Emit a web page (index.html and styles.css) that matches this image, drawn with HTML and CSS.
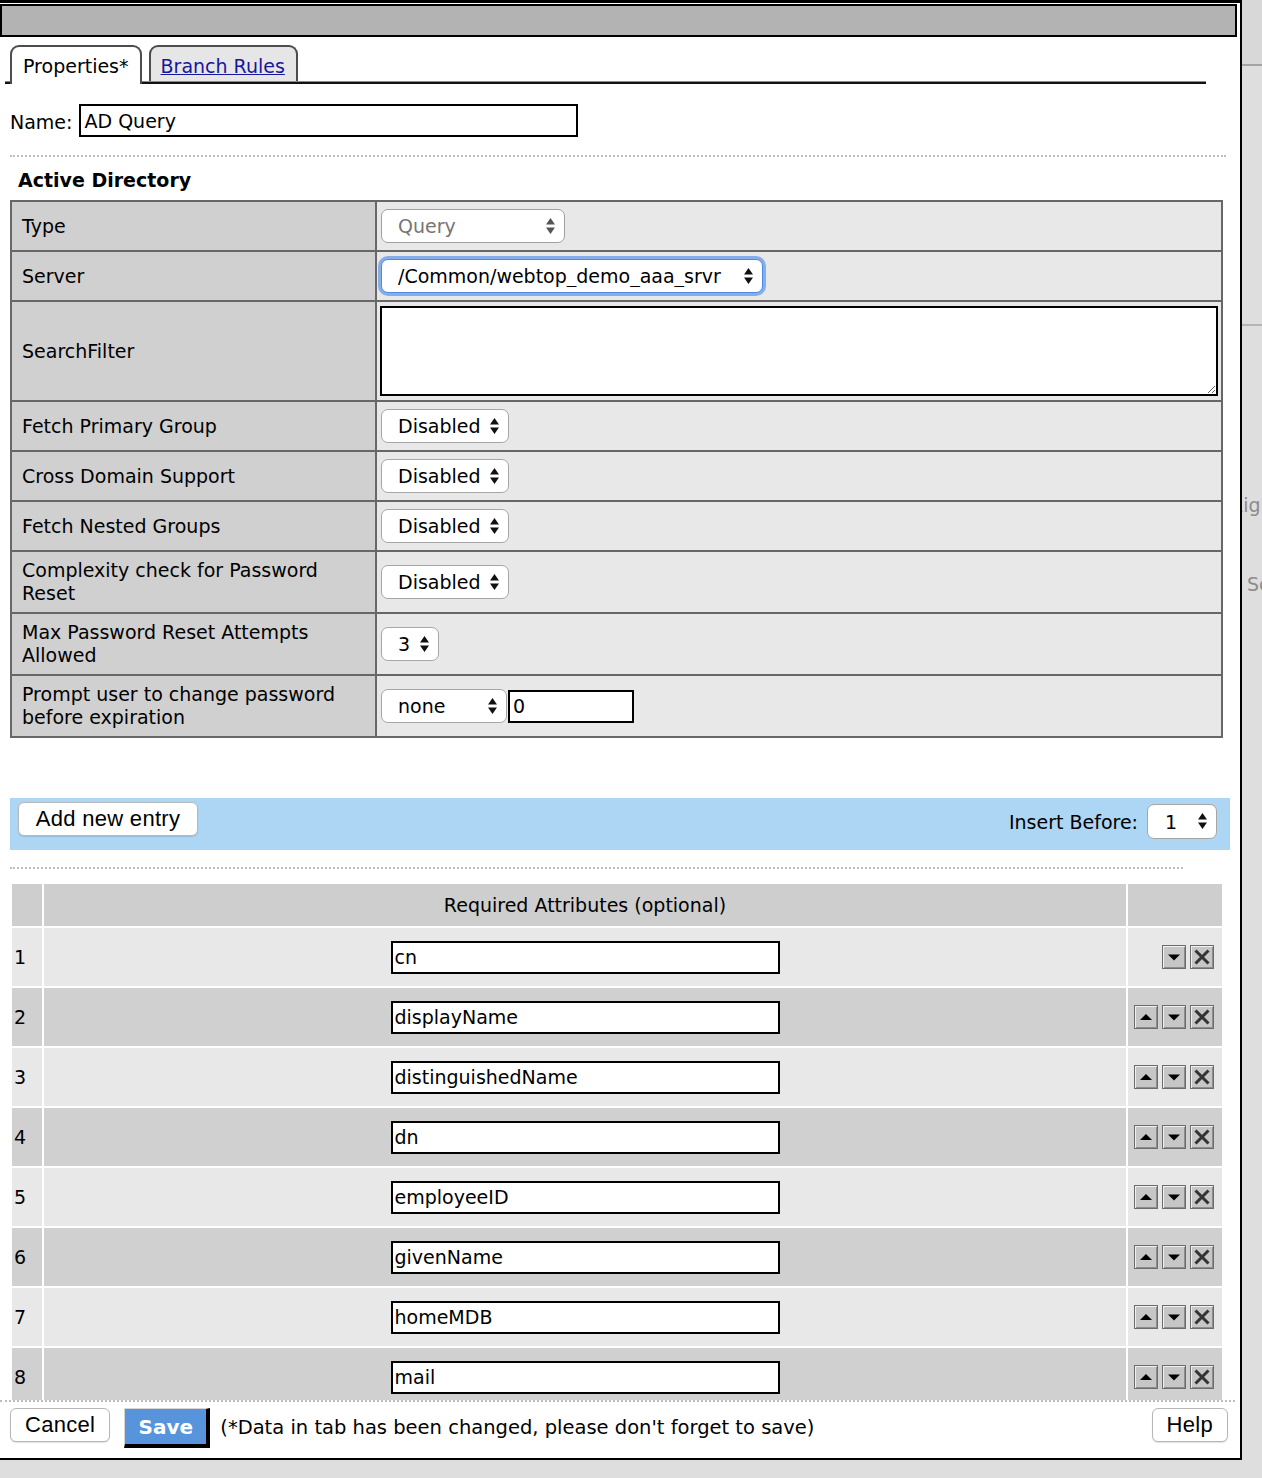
FILE: index.html
```html
<html>
<head>
<title>AD Query</title>
<link rel="stylesheet" href="styles.css">
</head>
<body>
<!-- shared glyphs for the select carets and the row buttons -->
<svg class="defs" width="0" height="0">
  <symbol id="updown" viewBox="0 0 9 16"><path d="M0 6.5 4.5 0 9 6.5Z M0 9.5 9 9.5 4.5 16Z"/></symbol>
  <symbol id="tri-up" viewBox="0 0 22 22"><path d="M5 14 11 8 17 14Z"/></symbol>
  <symbol id="tri-down" viewBox="0 0 22 22"><path d="M5 8.5 17 8.5 11 14.5Z"/></symbol>
  <symbol id="cross" viewBox="0 0 22 22"><path d="M4.5 4.5 17.5 17.5 M17.5 4.5 4.5 17.5" fill="none" stroke="#333" stroke-width="3"/></symbol>
</svg>

<div class="dialog">
  <div class="titlebar"></div>

  <div class="main">
    <div class="tabs">
      <span class="tab active">Properties*</span>
      <span class="tab"><a href="#">Branch Rules</a></span>
    </div>

    <div class="name-row">
      <label for="itemName">Name:</label>
      <input id="itemName" class="text name" type="text" value="AD Query">
    </div>

    <hr class="dots">
    <h3>Active Directory</h3>

    <table class="props">
      <colgroup><col class="c-label"><col></colgroup>
      <tr>
        <td class="lbl">Type</td>
        <td class="val"><span class="select w-query disabled"><select aria-disabled="true" tabindex="-1"><option>Query</option></select><svg class="caret"><use href="#updown"/></svg></span></td>
      </tr>
      <tr>
        <td class="lbl">Server</td>
        <td class="val"><span class="select w-server focus"><select><option>/Common/webtop_demo_aaa_srvr</option></select><svg class="caret"><use href="#updown"/></svg></span></td>
      </tr>
      <tr>
        <td class="lbl">SearchFilter</td>
        <td class="val tight"><textarea class="filter"></textarea></td>
      </tr>
      <tr>
        <td class="lbl">Fetch Primary Group</td>
        <td class="val"><span class="select w-flag"><select><option>Disabled</option><option>Enabled</option></select><svg class="caret"><use href="#updown"/></svg></span></td>
      </tr>
      <tr>
        <td class="lbl">Cross Domain Support</td>
        <td class="val"><span class="select w-flag"><select><option>Disabled</option><option>Enabled</option></select><svg class="caret"><use href="#updown"/></svg></span></td>
      </tr>
      <tr>
        <td class="lbl">Fetch Nested Groups</td>
        <td class="val"><span class="select w-flag"><select><option>Disabled</option><option>Enabled</option></select><svg class="caret"><use href="#updown"/></svg></span></td>
      </tr>
      <tr>
        <td class="lbl">Complexity check for Password Reset</td>
        <td class="val"><span class="select w-flag"><select><option>Disabled</option><option>Enabled</option></select><svg class="caret"><use href="#updown"/></svg></span></td>
      </tr>
      <tr>
        <td class="lbl">Max Password Reset Attempts Allowed</td>
        <td class="val"><span class="select w-num"><select><option>3</option></select><svg class="caret"><use href="#updown"/></svg></span></td>
      </tr>
      <tr>
        <td class="lbl">Prompt user to change password before expiration</td>
        <td class="val"><span class="select w-none"><select><option>none</option></select><svg class="caret"><use href="#updown"/></svg></span><input class="text days" type="text" value="0"></td>
      </tr>
    </table>

    <div class="entry-bar">
      <button class="btn add">Add new entry</button>
      <div class="insert">
        <label>Insert Before:</label>
        <span class="select w-before"><select><option>1</option></select><svg class="caret"><use href="#updown"/></svg></span>
      </div>
    </div>

    <hr class="dots short">

    <table class="attrs">
      <colgroup><col class="c-num"><col class="c-main"><col class="c-act"></colgroup>
      <thead>
        <tr><th></th><th>Required Attributes (optional)</th><th></th></tr>
      </thead>
      <tbody>
        <tr>
          <td class="num">1</td>
          <td class="field"><input class="text attr" type="text" value="cn"></td>
          <td class="act"><div class="act-btns">
            <button class="icon-btn"><svg><use href="#tri-down"/></svg></button>
            <button class="icon-btn"><svg><use href="#cross"/></svg></button>
          </div></td>
        </tr>
        <tr>
          <td class="num">2</td>
          <td class="field"><input class="text attr" type="text" value="displayName"></td>
          <td class="act"><div class="act-btns">
            <button class="icon-btn"><svg><use href="#tri-up"/></svg></button>
            <button class="icon-btn"><svg><use href="#tri-down"/></svg></button>
            <button class="icon-btn"><svg><use href="#cross"/></svg></button>
          </div></td>
        </tr>
        <tr>
          <td class="num">3</td>
          <td class="field"><input class="text attr" type="text" value="distinguishedName"></td>
          <td class="act"><div class="act-btns">
            <button class="icon-btn"><svg><use href="#tri-up"/></svg></button>
            <button class="icon-btn"><svg><use href="#tri-down"/></svg></button>
            <button class="icon-btn"><svg><use href="#cross"/></svg></button>
          </div></td>
        </tr>
        <tr>
          <td class="num">4</td>
          <td class="field"><input class="text attr" type="text" value="dn"></td>
          <td class="act"><div class="act-btns">
            <button class="icon-btn"><svg><use href="#tri-up"/></svg></button>
            <button class="icon-btn"><svg><use href="#tri-down"/></svg></button>
            <button class="icon-btn"><svg><use href="#cross"/></svg></button>
          </div></td>
        </tr>
        <tr>
          <td class="num">5</td>
          <td class="field"><input class="text attr" type="text" value="employeeID"></td>
          <td class="act"><div class="act-btns">
            <button class="icon-btn"><svg><use href="#tri-up"/></svg></button>
            <button class="icon-btn"><svg><use href="#tri-down"/></svg></button>
            <button class="icon-btn"><svg><use href="#cross"/></svg></button>
          </div></td>
        </tr>
        <tr>
          <td class="num">6</td>
          <td class="field"><input class="text attr" type="text" value="givenName"></td>
          <td class="act"><div class="act-btns">
            <button class="icon-btn"><svg><use href="#tri-up"/></svg></button>
            <button class="icon-btn"><svg><use href="#tri-down"/></svg></button>
            <button class="icon-btn"><svg><use href="#cross"/></svg></button>
          </div></td>
        </tr>
        <tr>
          <td class="num">7</td>
          <td class="field"><input class="text attr" type="text" value="homeMDB"></td>
          <td class="act"><div class="act-btns">
            <button class="icon-btn"><svg><use href="#tri-up"/></svg></button>
            <button class="icon-btn"><svg><use href="#tri-down"/></svg></button>
            <button class="icon-btn"><svg><use href="#cross"/></svg></button>
          </div></td>
        </tr>
        <tr>
          <td class="num">8</td>
          <td class="field"><input class="text attr" type="text" value="mail"></td>
          <td class="act"><div class="act-btns">
            <button class="icon-btn"><svg><use href="#tri-up"/></svg></button>
            <button class="icon-btn"><svg><use href="#tri-down"/></svg></button>
            <button class="icon-btn"><svg><use href="#cross"/></svg></button>
          </div></td>
        </tr>
      </tbody>
    </table>
  </div>

  <div class="footer">
    <button class="btn">Cancel</button>
    <button class="save">Save</button>
    <span class="note">(*Data in tab has been changed, please don't forget to save)</span>
    <button class="btn help">Help</button>
  </div>
</div>

<!-- the page underneath the dialog -->
<div class="behind">
  <div class="behind-head"></div>
  <div class="behind-rule"></div>
  <p class="behind-text first">Right</p>
  <p class="behind-text">Scope</p>
</div>
</body>
</html>
```

FILE: styles.css
```css
html, body {
    margin: 0;
    padding: 0;
}

body {
    display: flex;
    height: 1478px;
    overflow: hidden;
    background: #dedede;
    font-family: "DejaVu Sans", Verdana, sans-serif;
    font-size: 19px;
    color: #000;
}

table {
    font-size: inherit;
}

.defs {
    position: absolute;
    width: 0;
    height: 0;
}

/* dialog frame */
.dialog {
    flex: none;
    box-sizing: border-box;
    width: 1242px;
    height: 1460px;
    display: flex;
    flex-direction: column;
    background: #fff;
    border-top: 3px solid #000;
    border-right: 2px solid #000;
    border-bottom: 2px solid #000;
}

.titlebar {
    flex: none;
    height: 29px;
    margin: 1px 3px 0 0;
    background: #b3b3b3;
    border: 2px solid #000;
}

.main {
    flex: 1;
    overflow: hidden;
    padding-left: 10px;
}

/* tabs */
.tabs {
    display: flex;
    align-items: flex-end;
    gap: 7px;
    width: 1196px;
    margin: 8px 0 0 -5px;
    padding-left: 5px;
    border-bottom: 1px solid #8a8a8a;
    box-shadow: 0 2px 0 #111;
}

.tab {
    box-sizing: border-box;
    display: flex;
    align-items: center;
    height: 36px;
    padding: 3px 11px 0 10px;
    background: #e6e6e6;
    border: 2px solid #4d4d4d;
    border-bottom: 0;
    border-radius: 9px 9px 0 0;
}

.tab.active {
    height: 39px;
    margin-bottom: -3px;
    padding: 0 11px;
    background: #fff;
}

.tab a {
    color: #17179c;
}

/* name */
.name-row {
    display: flex;
    align-items: center;
    gap: 7px;
    margin-top: 22px;
}

.name-row label {
    padding-top: 2px;
}

.text {
    box-sizing: border-box;
    height: 33px;
    margin: 0;
    padding: 0 3px;
    border: 2px solid #000;
    background: #fff;
    font: inherit;
    color: #000;
    outline: none;
}

.text.name {
    width: 499px;
}

hr.dots {
    width: 1216px;
    height: 0;
    margin: 18px 0 0;
    border: 0;
    border-top: 2px dotted #bdbdbd;
}

hr.dots.short {
    width: 1173px;
    margin-top: 17px;
}

h3 {
    margin: 11px 0 8px;
    padding-left: 8px;
    font-size: 19px;
    line-height: 24px;
}

/* property grid */
.props {
    width: 1213px;
    border-collapse: collapse;
}

.props td {
    border: 2px solid #676767;
}

.c-label {
    width: 365px;
}

.lbl {
    padding: 7px 10px;
    line-height: 23px;
    background: #d0d0d0;
}

.val {
    padding: 7px 4px;
    background: #e8e8e8;
}

.val.tight {
    padding: 4px 3px;
}

.filter {
    display: block;
    box-sizing: border-box;
    width: 838px;
    height: 90px;
    margin: 0;
    border: 2px solid #000;
    font: inherit;
    outline: none;
}

.text.days {
    width: 126px;
    margin-left: 1px;
    vertical-align: middle;
}

/* selects */
.select {
    position: relative;
    display: inline-block;
    vertical-align: middle;
}

.select select {
    -webkit-appearance: none;
    appearance: none;
    box-sizing: border-box;
    width: 100%;
    height: 34px;
    margin: 0;
    padding: 0 28px 0 16px;
    border: 1px solid #a6a6a6;
    border-radius: 7px;
    background: #fff;
    font: inherit;
    color: #000;
    outline: none;
}

.select .caret {
    position: absolute;
    right: 10px;
    top: 9px;
    width: 9px;
    height: 16px;
    fill: #111;
    pointer-events: none;
}

.select.disabled select {
    color: #757575;
    border-color: #a0a0a0;
    pointer-events: none;
}

.select.disabled .caret {
    fill: #555;
}

.select.focus select {
    border-color: #4f8ce0;
    box-shadow: 0 0 0 3px #84ade9;
}

.w-query { width: 184px; }
.w-server { width: 382px; }
.w-flag { width: 128px; }
.w-num { width: 58px; }
.w-none { width: 126px; }
.w-before { width: 70px; }

.w-before select {
    height: 35px;
    padding-left: 17px;
}

/* entry bar */
.entry-bar {
    box-sizing: border-box;
    display: flex;
    justify-content: space-between;
    align-items: flex-start;
    width: 1220px;
    height: 52px;
    margin-top: 60px;
    padding: 4px 13px 0 8px;
    background: #acd6f3;
}

.insert {
    display: flex;
    align-items: center;
    gap: 9px;
    margin-top: 2px;
}

.btn {
    box-sizing: border-box;
    height: 34px;
    padding: 0 14px;
    background: #fff;
    border: 1px solid #b7b7b7;
    border-radius: 6px;
    box-shadow: 0 1px 1px rgba(0, 0, 0, 0.12);
    font-family: "Liberation Sans", Arial, sans-serif;
    font-size: 22px;
    letter-spacing: 0.3px;
    color: #000;
}

.btn.add {
    width: 180px;
}

/* attribute list */
.attrs {
    width: 1214px;
    margin-top: 13px;
    border-spacing: 2px;
}

.c-num { width: 30px; }
.c-act { width: 94px; }

.attrs th {
    height: 42px;
    padding: 0;
    background: #cecece;
    font-weight: normal;
}

.attrs td {
    height: 58px;
    padding: 0;
    background: #e8e8e8;
}

.attrs tbody tr:nth-child(even) td {
    background: #d0d0d0;
}

.attrs td.num {
    padding-left: 2px;
}

.attrs td.field {
    text-align: center;
}

.text.attr {
    width: 389px;
    padding: 0 2px;
    text-align: left;
}

.act-btns {
    display: flex;
    justify-content: flex-end;
    gap: 4px;
    padding-right: 8px;
}

.icon-btn {
    box-sizing: border-box;
    width: 24px;
    height: 24px;
    padding: 0;
    background: #c6c6c6;
    border: 1px solid #6c6c6c;
    box-shadow: inset 1px 1px 0 #f0f0f0, inset -1px -1px 0 #8d8d8d;
}

.icon-btn svg {
    display: block;
    width: 22px;
    height: 22px;
    fill: #000;
}

/* footer */
.footer {
    flex: none;
    box-sizing: border-box;
    display: flex;
    align-items: flex-start;
    width: 1235px;
    height: 58px;
    padding: 6px 7px 0 10px;
    border-top: 2px dotted #bdbdbd;
}

.save {
    box-sizing: border-box;
    width: 86px;
    height: 40px;
    margin: 0 10px 0 14px;
    padding: 0;
    background: #5894dc;
    border-style: solid;
    border-width: 1px 4px 4px 1px;
    border-color: #d6d6d6 #000 #000 #d6d6d6;
    font-family: "DejaVu Sans", Verdana, sans-serif;
    font-weight: bold;
    font-size: 20px;
    color: #fff;
}

.note {
    line-height: 40px;
    font-size: 19.5px;
}

.btn.help {
    margin-left: auto;
}

/* page under the dialog */
.behind {
    flex: 1;
    overflow: hidden;
    color: #8c8c8c;
}

.behind-head {
    height: 64px;
    background: #d8d8d8;
    border-bottom: 2px solid #a4a4a4;
}

.behind-rule {
    height: 2px;
    margin-top: 258px;
    background: #b4b4b4;
}

.behind-text {
    margin: 0;
    white-space: nowrap;
    line-height: 24px;
}

.behind-text.first {
    margin: 167px 0 0 -12px;
}

.behind-text + .behind-text {
    margin: 55px 0 0 5px;
}
```
